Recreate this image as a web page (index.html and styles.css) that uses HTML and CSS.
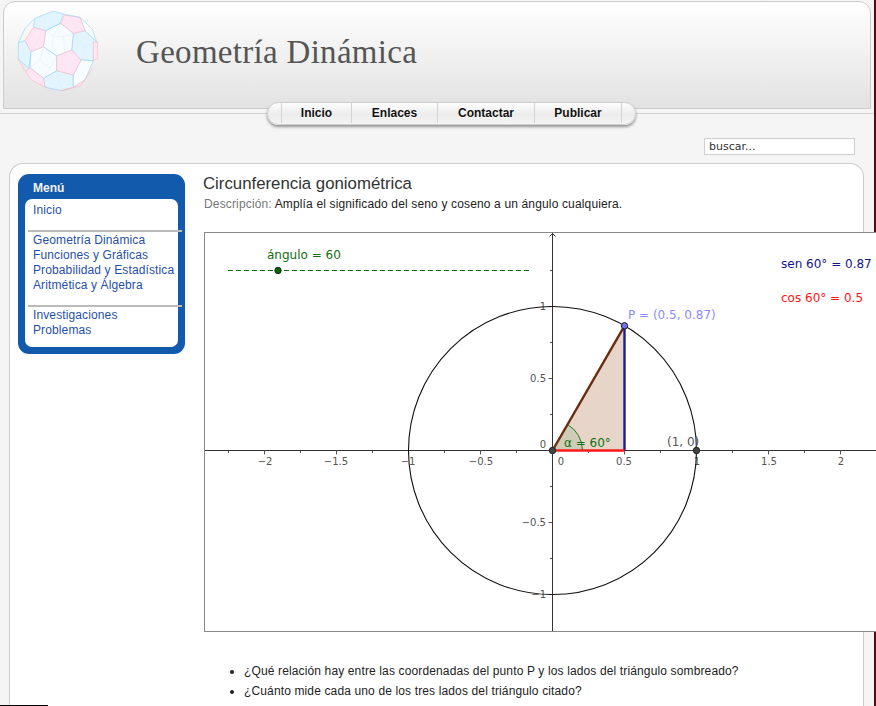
FILE: index.html
```html
<!DOCTYPE html>
<html lang="es">
<head>
<meta charset="utf-8">
<title>Geometría Dinámica</title>
<link rel="stylesheet" href="styles.css">
</head>
<body>
<div class="page">
  <div class="masthead">
    <header class="banner">
      <svg class="logo" viewBox="33 27 252 252" aria-hidden="true">
        <polygon class="hex-b" points="90,55 145,33 175,42 165,70 122,92 85,82"/>
        <polygon class="hex-b" points="205,100 240,92 275,125 265,182 228,180 200,150"/>
        <polygon class="hex-b" points="115,235 155,212 205,225 205,262 170,272 120,262"/>
        <polygon class="hex-b" points="60,122 78,155 72,205 40,178 40,128"/>
        <polygon class="hex-w" points="122,92 168,70 205,100 200,150 155,168 115,140"/>
        <polygon class="hex-w" points="78,155 115,140 155,168 155,212 115,235 75,203"/>
        <polygon class="hex-w" points="228,180 265,182 240,240 205,262 205,225"/>
        <polygon class="hex-w" points="240,92 225,52 262,88 275,125"/>
        <polygon class="pen" points="85,82 122,92 115,140 78,155 60,122"/>
        <polygon class="pen" points="155,168 200,150 228,180 205,225 155,212"/>
        <polygon class="pen" points="178,45 225,52 240,92 205,100 168,70"/>
        <polygon class="pen" points="265,125 278,128 278,175 265,182"/>
        <polygon class="pen" points="62,215 75,203 115,235 120,262 80,240"/>
        <polygon class="pen" points="170,272 205,262 240,240 225,258"/>
        <polyline class="edge-b" points="40,128 60,85 90,55"/>
        <polyline class="edge-b" points="175,42 225,52"/>
        <polyline class="edge-p" points="40,178 62,215"/>
        <polyline class="edge-p" points="262,205 240,240"/>
        <path class="faint" d="M122,92 L145,108 L168,70 M145,108 L140,150 M205,100 L175,110 L145,108 M175,110 L180,158 M103,112 L122,92 M78,155 L103,112 L115,140 M115,140 L105,180 L75,203 M105,180 L135,205 L155,168 M135,205 L115,235 M240,140 L205,100 M240,140 L275,125 M240,140 L228,180 M195,45 L205,75 M160,240 L155,212 M160,240 L170,272 M60,170 L78,155 M60,170 L40,178 M115,50 L122,75"/>
      </svg>
      <h1 class="site-title">Geometría Dinámica</h1>
    </header>
  </div>

  <nav class="topnav">
    <a class="topnav-item" href="#">Inicio</a>
    <a class="topnav-item" href="#">Enlaces</a>
    <a class="topnav-item" href="#">Contactar</a>
    <a class="topnav-item" href="#">Publicar</a>
  </nav>

  <div class="search-row">
    <input class="search" type="text" value="buscar...">
  </div>

  <div class="card">
    <aside class="menu">
      <div class="menu-title">Menú</div>
      <div class="menu-body">
        <ul class="menu-group">
          <li><a href="#">Inicio</a></li>
        </ul>
        <hr class="menu-rule">
        <ul class="menu-group">
          <li><a href="#">Geometría Dinámica</a></li>
          <li><a href="#">Funciones y Gráficas</a></li>
          <li><a href="#">Probabilidad y Estadística</a></li>
          <li><a href="#">Aritmética y Álgebra</a></li>
        </ul>
        <hr class="menu-rule">
        <ul class="menu-group">
          <li><a href="#">Investigaciones</a></li>
          <li><a href="#">Problemas</a></li>
        </ul>
      </div>
    </aside>

    <main class="content">
      <h2 class="title">Circunferencia goniométrica</h2>
      <p class="desc"><span class="desc-label">Descripción:</span> Amplía el significado del seno y coseno a un ángulo cualquiera.</p>

      <div class="graph">
        <svg class="plot" viewBox="205 233 699 398" aria-label="Circunferencia goniométrica">
          <!-- triangle and angle fills -->
          <polygon class="tri" points="552.5,450.5 624.5,450.5 624.5,325.8"/>
          <path class="angle" d="M552.5,450.5 L582.5,450.5 A30,30 0 0 0 567.5,424.5 Z"/>

          <!-- axes -->
          <line class="axis" x1="205" y1="450.5" x2="904" y2="450.5"/>
          <line class="axis" x1="552.5" y1="233" x2="552.5" y2="631"/>
          <polyline class="axis-arrow" points="549.5,236.5 552.5,233.5 555.5,236.5"/>
          <path class="ticks" d="M228.5,451V453 M264.5,451V454.5 M300.5,451V453 M336.5,451V454.5 M372.5,451V453 M408.5,451V454.5 M444.5,451V453 M480.5,451V454.5 M516.5,451V453 M588.5,451V453 M624.5,451V454.5 M660.5,451V453 M696.5,451V454.5 M732.5,451V453 M768.5,451V454.5 M804.5,451V453 M840.5,451V454.5 M550,270.5H552 M550,342.5H552 M550,414.5H552 M550,486.5H552 M550,558.5H552 M548.5,306.5H552 M548.5,378.5H552 M548.5,522.5H552 M548.5,594.5H552"/>

          <!-- axis numbers -->
          <text class="num mid" x="265" y="465">−2</text>
          <text class="num mid" x="336" y="465">−1.5</text>
          <text class="num mid" x="408" y="465">−1</text>
          <text class="num mid" x="481" y="465">−0.5</text>
          <text class="num mid" x="561" y="465">0</text>
          <text class="num mid" x="624" y="465">0.5</text>
          <text class="num mid" x="697" y="465">1</text>
          <text class="num mid" x="769" y="465">1.5</text>
          <text class="num mid" x="841" y="465">2</text>
          <text class="num end" x="546" y="310">1</text>
          <text class="num end" x="546" y="382">0.5</text>
          <text class="num end" x="546" y="448">0</text>
          <text class="num end" x="546" y="526">−0.5</text>
          <text class="num end" x="546" y="598">−1</text>

          <!-- circle and triangle sides -->
          <circle class="unit" cx="552.5" cy="450.5" r="144"/>
          <line class="side-hyp" x1="552.5" y1="450.5" x2="624.5" y2="325.8"/>
          <line class="side-sin" x1="624.5" y1="450.5" x2="624.5" y2="325.8"/>
          <line class="side-cos" x1="552.5" y1="450.5" x2="624.5" y2="450.5"/>
          <path class="angle-arc" d="M582.5,450.5 A30,30 0 0 0 567.5,424.5"/>

          <!-- slider -->
          <line class="slider" x1="228" y1="270.5" x2="530" y2="270.5"/>
          <circle class="slider-dot" cx="278" cy="270.5" r="3.2"/>
          <text class="lab lab-green" x="267" y="259">ángulo = 60</text>

          <!-- points -->
          <circle class="pt" cx="552.5" cy="450.5" r="3.2"/>
          <circle class="pt" cx="696.5" cy="450.5" r="3.2"/>
          <circle class="pt-p" cx="624.5" cy="325.8" r="3.2"/>

          <!-- labels -->
          <text class="lab lab-p" x="628" y="319">P = (0.5, 0.87)</text>
          <text class="lab lab-grey" x="667" y="446">(1, 0)</text>
          <text class="lab lab-green" x="564" y="447">α = 60°</text>
          <text class="lab lab-navy" x="781" y="268">sen 60° = 0.87</text>
          <text class="lab lab-red" x="781" y="302">cos 60° = 0.5</text>
        </svg>
      </div>

      <ul class="questions">
        <li>¿Qué relación hay entre las coordenadas del punto P y los lados del triángulo sombreado?</li>
        <li>¿Cuánto mide cada uno de los tres lados del triángulo citado?</li>
      </ul>
    </main>
  </div>
</div>
<div class="corner-bar"></div>
</body>
</html>
```
FILE: styles.css
```css
html, body {
  margin: 0;
  padding: 0;
  height: 100%;
  overflow: hidden;
}
body {
  position: relative;
  background: #5a0a0c;
  font-family: "Liberation Sans", Arial, sans-serif;
  font-size: 12px;
  color: #222;
}
.page {
  width: 874px;
  height: 706px;
  background: #f5f5f5;
}
.masthead {
  box-sizing: border-box;
  height: 114px;
  padding-top: 1px;
  border-bottom: 1px solid #d2d2d2;
}
.banner {
  box-sizing: border-box;
  display: flex;
  align-items: flex-start;
  width: 868px;
  height: 108px;
  margin-left: 3px;
  padding: 7px 0 0 12px;
  border: 1px solid #cccccc;
  border-radius: 12px 12px 0 0;
  background: linear-gradient(#ffffff, #e2e2e2);
}
.logo {
  width: 84px;
  height: 84px;
  flex: none;
}
.hex-b { fill: #e2f4fd; stroke: #8ed2fa; stroke-width: 1.8; stroke-linejoin: round; }
.hex-w { fill: #f7fcff; stroke: #8ed2fa; stroke-width: 1.8; stroke-linejoin: round; }
.pen { fill: #ffe6f5; stroke: #ffb4bd; stroke-width: 1.8; stroke-linejoin: round; }
.edge-b { fill: none; stroke: #8ed2fa; stroke-width: 1.8; }
.edge-p { fill: none; stroke: #ffb4bd; stroke-width: 1.8; }
.faint { fill: none; stroke: #d0e2ec; stroke-opacity: .6; stroke-width: 1.2; }
.site-title {
  margin: 19px 0 0 36px;
  font-family: "Liberation Serif", "Times New Roman", serif;
  font-weight: 400;
  font-size: 33px;
  line-height: 48px;
  color: #555555;
  letter-spacing: .3px;
}
.topnav {
  position: relative;
  display: grid;
  grid-template-columns: 70px 86px 97px 88px;
  box-sizing: border-box;
  width: 369px;
  height: 23px;
  margin: -12px 0 0 267px;
  padding: 0 14px 1px 13px;
  border: 1px solid #d0d0d0;
  border-radius: 12px;
  background: linear-gradient(#fdfdfd, #ececec 55%, #f4f4f4);
  box-shadow: 0 2px 3px rgba(0, 0, 0, .4);
}
.topnav-item {
  display: flex;
  align-items: center;
  justify-content: center;
  border-left: 1px solid #d4d4d4;
  font-weight: 700;
  font-size: 12px;
  color: #111111;
  text-decoration: none;
  text-shadow: 0 1px 0 #ffffff;
}
.topnav-item:last-child {
  border-right: 1px solid #d4d4d4;
}
.search-row {
  display: flex;
  justify-content: flex-end;
  padding: 13px 19px 0 0;
}
.search {
  box-sizing: border-box;
  width: 151px;
  height: 17px;
  margin: 0;
  padding: 0 4px;
  border: 1px solid #cfcfcf;
  border-radius: 0;
  background: #ffffff;
  font-family: "DejaVu Sans", sans-serif;
  font-size: 11px;
  color: #333333;
  outline: none;
}
.card {
  box-sizing: border-box;
  display: flex;
  align-items: flex-start;
  gap: 18px;
  width: 855px;
  height: 543px;
  margin: 8px 0 0 9px;
  padding: 10px 0 0 8px;
  border: 1px solid #cccccc;
  border-bottom: 0;
  border-radius: 14px 14px 0 0;
  background: #ffffff;
}
.menu {
  flex: none;
  width: 167px;
  box-sizing: border-box;
  padding: 0 7px 7px;
  border-radius: 11px;
  background: #125aab;
}
.menu-title {
  height: 25px;
  padding-left: 8px;
  line-height: 28px;
  font-weight: 700;
  font-size: 12px;
  color: #f2f2f2;
}
.menu-body {
  padding: 4px 0 9px;
  border-radius: 7px;
  background: #ffffff;
}
.menu-group {
  margin: 0 0 12px;
  padding: 0 0 0 8px;
  list-style: none;
  line-height: 15px;
  letter-spacing: .12px;
}
.menu-group:last-child {
  margin-bottom: 0;
}
.menu-group a {
  color: #1f50a8;
  text-decoration: none;
}
.menu-rule {
  box-sizing: border-box;
  width: 154px;
  height: 2px;
  margin: 0 0 1px 3px;
  border: 0;
  background: #bbbbbb;
}
.content {
  flex: none;
  width: 660px;
  min-width: 0;
}
.title {
  margin: 0;
  font-weight: 400;
  font-size: 16.8px;
  line-height: 20px;
  color: #333333;
}
.desc {
  margin: 3px 0 0 1px;
  font-size: 12px;
  line-height: 15px;
  letter-spacing: .15px;
  color: #222222;
}
.desc-label {
  color: #777777;
}
.graph {
  box-sizing: border-box;
  width: 701px;
  height: 400px;
  margin: 20px 0 0 1px;
  border: 1px solid #888888;
  background: #ffffff;
}
.plot {
  display: block;
  width: 699px;
  height: 398px;
}
.tri { fill: #e8d5ca; }
.angle { fill: #cfcdb8; }
.axis { stroke: #333333; stroke-width: 1; }
.axis-arrow { fill: none; stroke: #333333; stroke-width: 1; }
.ticks { fill: none; stroke: #555555; stroke-width: 1; }
.unit { fill: none; stroke: #111111; stroke-width: 1.1; }
.side-hyp { stroke: #6b2c0e; stroke-width: 2.4; }
.side-sin { stroke: #1c1c8e; stroke-width: 2.4; }
.side-cos { stroke: #ff1a1a; stroke-width: 2.4; }
.angle-arc { fill: none; stroke: #1f7a1f; stroke-width: 1; }
.slider { stroke: #0a6a0a; stroke-width: 1; stroke-dasharray: 5 3; }
.slider-dot { fill: #0a640a; stroke: #1a2a1a; stroke-width: 1; }
.pt { fill: #444444; stroke: #222222; stroke-width: 1; }
.pt-p { fill: #7070ec; stroke: #222222; stroke-width: 1; }
.num {
  font-family: "DejaVu Sans", sans-serif;
  font-size: 10px;
  fill: #555555;
}
.mid { text-anchor: middle; }
.end { text-anchor: end; }
.lab {
  font-family: "DejaVu Sans", sans-serif;
  font-size: 12px;
}
.lab-green { fill: #0f700f; }
.lab-p { fill: #8b8bff; }
.lab-grey { fill: #555555; }
.lab-navy { fill: #14148c; }
.lab-red { fill: #ff1414; }
.questions {
  margin: 29px 0 0;
  padding: 0 0 0 41px;
  font-size: 12px;
  line-height: 20px;
  letter-spacing: .135px;
  color: #222222;
}
.corner-bar {
  position: absolute;
  left: 0;
  bottom: 0;
  width: 48px;
  height: 1px;
  background: #000000;
}
```
